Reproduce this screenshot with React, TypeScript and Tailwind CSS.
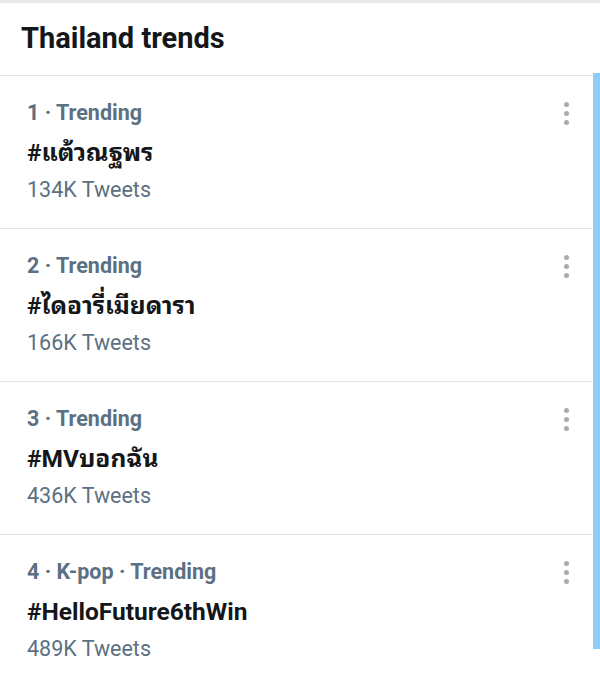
import React from "react";

const trends = [
  { meta: "1 · Trending", tag: "#แต้วณฐพร", count: "134K Tweets" },
  { meta: "2 · Trending", tag: "#ไดอารี่เมียดารา", count: "166K Tweets" },
  { meta: "3 · Trending", tag: "#MVบอกฉัน", count: "436K Tweets" },
  { meta: "4 · K-pop · Trending", tag: "#HelloFuture6thWin", count: "489K Tweets" },
];

function Dots() {
  return (
    <div className="flex flex-col items-center gap-[4px] pt-[8px]">
      <span className="block w-[5px] h-[5px] rounded-full bg-[#a3acb4]" />
      <span className="block w-[5px] h-[5px] rounded-full bg-[#a3acb4]" />
      <span className="block w-[5px] h-[5px] rounded-full bg-[#a3acb4]" />
    </div>
  );
}

export default function App() {
  return (
    <div
      className="relative w-[600px] h-[678px] bg-white overflow-hidden"
      style={{ fontFamily: "Roboto, 'Noto Sans Thai Looped', 'Noto Sans Thai', 'Noto Sans', sans-serif" }}
    >
      <div className="h-[3px] bg-[#e6eaed]" />
      <div className="h-[73px] flex items-center pl-[21px] border-b border-[#e3e6e8]">
        <h1 className="text-[29px] font-bold text-[#14171a] leading-none pb-[2px]">Thailand trends</h1>
      </div>
      <div className="pr-[7px]">
        {trends.map((t, i) => (
          <div
            key={i}
            className={`flex justify-between h-[153px] pl-[27px] pr-[24px] pt-[18px] ${i < trends.length - 1 ? "border-b border-[#e3e6e8]" : ""}`}
          >
            <div className="flex flex-col">
              <div className="text-[21.5px] font-bold text-[#5b7083] leading-[38px]">{t.meta}</div>
              <div className="text-[24.5px] font-bold text-[#14171a] leading-[38px] mt-[2px]">{t.tag}</div>
              <div className="text-[21.5px] text-[#5b7083] leading-[36px]">{t.count}</div>
            </div>
            <Dots />
          </div>
        ))}
      </div>
      <div className="absolute right-0 top-[73px] w-[7px] h-[576px] bg-[#8ecdf7]" />
    </div>
  );
}
